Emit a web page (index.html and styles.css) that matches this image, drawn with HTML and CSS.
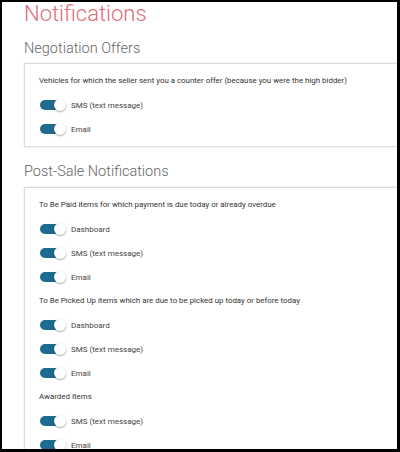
FILE: index.html
```html
<!DOCTYPE html>
<html lang="en">
<head>
<meta charset="utf-8">
<title>Notifications</title>
<link rel="stylesheet" href="styles.css">
</head>
<body>
<div class="frame">
  <h1 class="page-title">Notifications</h1>

  <section class="group">
    <h2 class="group-title">Negotiation Offers</h2>
    <div class="card">
      <p class="desc">Vehicles for which the seller sent you a counter offer (because you were the high bidder)</p>
      <label class="opt"><span class="toggle"></span><span class="opt-label">SMS (text message)</span></label>
      <label class="opt"><span class="toggle"></span><span class="opt-label">Email</span></label>
    </div>
  </section>

  <section class="group group-second">
    <h2 class="group-title">Post-Sale Notifications</h2>
    <div class="card">
      <p class="desc">To Be Paid items for which payment is due today or already overdue</p>
      <label class="opt"><span class="toggle"></span><span class="opt-label">Dashboard</span></label>
      <label class="opt"><span class="toggle"></span><span class="opt-label">SMS (text message)</span></label>
      <label class="opt"><span class="toggle"></span><span class="opt-label">Email</span></label>
      <p class="desc">To Be Picked Up items which are due to be picked up today or before today</p>
      <label class="opt"><span class="toggle"></span><span class="opt-label">Dashboard</span></label>
      <label class="opt"><span class="toggle"></span><span class="opt-label">SMS (text message)</span></label>
      <label class="opt"><span class="toggle"></span><span class="opt-label">Email</span></label>
      <p class="desc">Awarded Items</p>
      <label class="opt"><span class="toggle"></span><span class="opt-label">SMS (text message)</span></label>
      <label class="opt"><span class="toggle"></span><span class="opt-label">Email</span></label>
    </div>
  </section>
</div>
</body>
</html>
```

FILE: styles.css
```css
* { box-sizing: border-box; }

html, body {
  margin: 0;
  padding: 0;
  background: #ffffff;
}

body {
  font-family: Roboto, "Liberation Sans", sans-serif;
}

.frame {
  width: 400px;
  height: 452px;
  overflow: hidden;
  border-style: solid;
  border-color: #000000;
  border-width: 2px 3px 3px 2px;
  padding-left: 22px;
  background: #ffffff;
}

.page-title {
  margin: 0;
  font-size: 22px;
  line-height: 24px;
  font-weight: 300;
  color: #de6b78;
}

.group-title {
  margin: 13px 0 4px;
  font-size: 14.5px;
  line-height: 20px;
  font-weight: 300;
  color: #666666;
}

.group-second .group-title {
  margin-top: 15px;
  margin-bottom: 5px;
}

.card {
  margin-right: -40px;
  border: 1px solid #dcdcdc;
  box-shadow: 0 0 2px rgba(0, 0, 0, 0.12);
  padding: 5px 0 5px 14px;
  display: flex;
  flex-direction: column;
}

.desc {
  margin: 0;
  font-size: 7.9px;
  line-height: 24px;
  color: #333333;
}

.opt {
  display: flex;
  align-items: center;
  height: 24px;
  gap: 5px;
  padding-left: 1px;
}

.toggle {
  position: relative;
  flex: none;
  width: 26px;
  height: 12px;
}

.toggle::before {
  content: "";
  position: absolute;
  left: 0;
  top: 1px;
  width: 24px;
  height: 10px;
  border-radius: 5px;
  background: #1f6a8f;
}

.toggle::after {
  content: "";
  position: absolute;
  right: 0;
  top: 0;
  width: 12px;
  height: 12px;
  border-radius: 50%;
  background: #ffffff;
  box-shadow: 0 1px 2px rgba(0, 0, 0, 0.35);
}

.opt-label {
  font-size: 8px;
  color: #444444;
}
```
